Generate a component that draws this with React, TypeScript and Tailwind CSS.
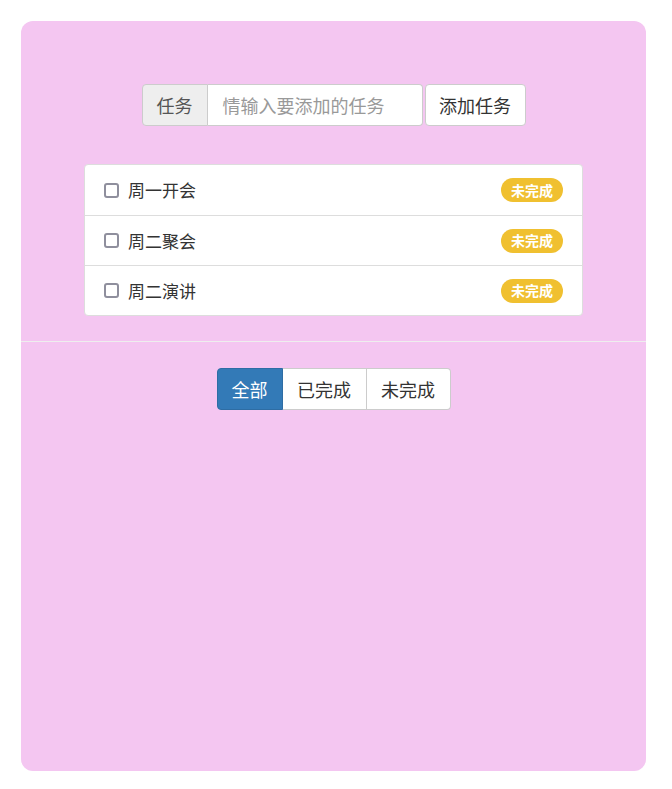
import React from "react";

const items = ["周一开会", "周二聚会", "周二演讲"];

export default function App() {
  return (
    <div
      className="min-h-[789px] bg-white pt-[21px] px-[21px]"
      style={{ fontFamily: '"Noto Sans CJK SC", "Helvetica Neue", Arial, sans-serif' }}
    >
      <div className="w-[625px] h-[750px] rounded-[12px] bg-[#f4c6f1] flex flex-col items-center pt-[63px]">
        <div className="flex items-stretch h-[42px]">
          <div className="w-[66px] flex items-center justify-center bg-[#eeeeee] border border-[#cccccc] rounded-l-[4px] text-[18px] text-[#555555]">
            任务
          </div>
          <div className="w-[215px] flex items-center bg-white border border-l-0 border-[#cccccc] rounded-r-[4px] pl-[15px] text-[18px] text-[#999999]">
            情输入要添加的任务
          </div>
          <button className="ml-[2px] w-[101px] bg-white border border-[#cccccc] rounded-[4px] text-[18px] text-[#333333]">
            添加任务
          </button>
        </div>

        <div className="mt-[38px] w-[499px] bg-white border border-[#dddddd] rounded-[4px] flex flex-col">
          {items.map((t, i) => (
            <div
              key={t}
              className={`h-[50px] flex items-center pl-[19px] pr-[19px] ${i > 0 ? "border-t border-[#dddddd]" : ""}`}
            >
              <span className="w-[15px] h-[15px] border-2 border-[#8f8f9d] rounded-[3px] box-border" />
              <span className="ml-[9px] text-[17px] text-[#333333]">{t}</span>
              <span className="ml-auto h-[24px] w-[62px] rounded-full bg-[#f0c030] text-white font-bold text-[14px] flex items-center justify-center">
                未完成
              </span>
            </div>
          ))}
        </div>

        <div className="mt-[25px] w-full h-px bg-[#eeeeee]" />

        <div className="mt-[26px] flex h-[42px] text-[18px]">
          <button className="w-[66px] bg-[#337ab7] border border-[#2e6da4] text-white rounded-l-[4px]">
            全部
          </button>
          <button className="w-[84px] bg-white border border-l-0 border-[#cccccc] text-[#333333]">
            已完成
          </button>
          <button className="w-[84px] bg-white border border-l-0 border-[#cccccc] text-[#333333] rounded-r-[4px]">
            未完成
          </button>
        </div>
      </div>
    </div>
  );
}
